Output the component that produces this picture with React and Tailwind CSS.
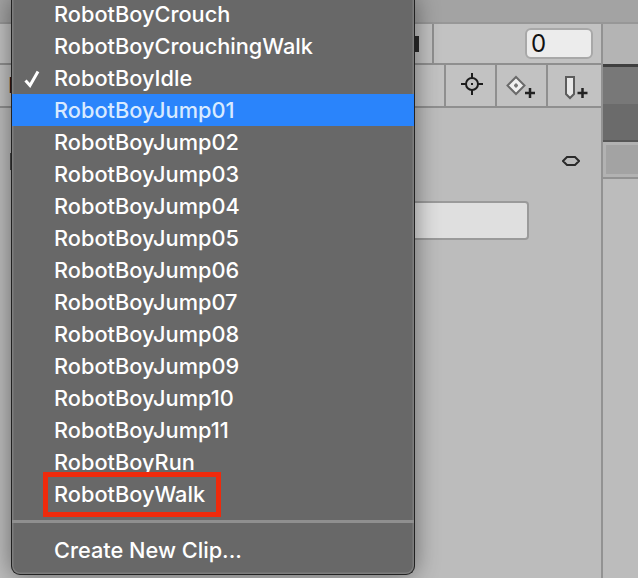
import React from "react";

const clips = [
  "RobotBoyCrouch",
  "RobotBoyCrouchingWalk",
  "RobotBoyIdle",
  "RobotBoyJump01",
  "RobotBoyJump02",
  "RobotBoyJump03",
  "RobotBoyJump04",
  "RobotBoyJump05",
  "RobotBoyJump06",
  "RobotBoyJump07",
  "RobotBoyJump08",
  "RobotBoyJump09",
  "RobotBoyJump10",
  "RobotBoyJump11",
  "RobotBoyRun",
  "RobotBoyWalk",
];

function TargetIcon() {
  return (
    <svg className="mt-[-3px] ml-[3px] block" width="24" height="24" viewBox="0 0 24 24" fill="none" stroke="#1c1c1c" strokeWidth="2">
      <circle cx="12" cy="12" r="6" />
      <path d="M12 1v5M12 18v5M1 12h5M18 12h5" />
      <rect x="11" y="11" width="2" height="2" fill="#1c1c1c" stroke="none" />
    </svg>
  );
}

function AddKeyIcon() {
  return (
    <svg className="block" width="32" height="28" viewBox="0 0 32 28">
      <path d="M10 5l8.500 8.500-8.500 8.500-8.500-8.500z" fill="#f0f0f0" stroke="#6a6a6a" strokeWidth="2" />
      <path d="M10 11.500v4M8 13.500h4" stroke="#777" strokeWidth="2" />
      <path d="M24 16v10M19 21h10" stroke="#222" strokeWidth="2.500" />
    </svg>
  );
}

function AddEventIcon() {
  return (
    <svg className="block" width="28" height="32" viewBox="0 0 28 32">
      <path d="M5 7h8v17l-4 4-4-4z" fill="#e8e8e8" stroke="#5c5c5c" strokeWidth="2" />
      <path d="M21.500 18v10M16.500 23h10" stroke="#222" strokeWidth="2.500" />
    </svg>
  );
}

function EyeIcon() {
  return (
    <svg className="block" width="18" height="10" viewBox="0 0 18 10" fill="none" stroke="#2a2a2a" strokeWidth="2">
      <path d="M1 5l4-4h8l4 4-4 4H5z" />
    </svg>
  );
}

function CheckIcon() {
  return (
    <svg className="absolute left-[12px] top-[8px] block" width="16" height="18" viewBox="0 0 16 18" fill="none" stroke="#fff" strokeWidth="3">
      <path d="M1.500 10.500l4.500 5 8-14" />
    </svg>
  );
}

function ClipMenu() {
  return (
    <div className="absolute left-[11px] top-[-2px] w-[404px] rounded-b-[9px] border border-t-0 border-[#222] bg-[#686868] pb-[8px] text-white shadow-[0_0_24px_rgba(0,0,0,0.45),inset_0_0_0_1.500px_rgba(255,255,255,0.14)]">
      {clips.map((clip, idx) => (
        <div
          key={clip}
          className={`relative h-[32px] pl-[42px] leading-[32px] ${idx === 3 ? "bg-[#2a84fb] text-[#d8eaff]" : ""}`}
        >
          {idx === 2 && <CheckIcon />}
          {clip}
        </div>
      ))}
      <div className="mt-[10px] mb-[11px] h-[3px] bg-[#8f8f8f]" />
      <div className="h-[32px] pl-[42px] leading-[32px]">Create New Clip...</div>
    </div>
  );
}

export default function App() {
  return (
    <div className="relative flex h-[578px] w-[638px] flex-col overflow-hidden bg-[#bcbcbc] font-['Inter','Liberation_Sans',sans-serif] text-[21.75px] font-medium">
      <div className="h-[24px] border-b-2 border-[#979797] bg-[#a3a3a3]" />

      <div className="flex flex-1">
        <div className="flex w-[601px] flex-col">
          {/* timeline toolbar */}
          <div className="flex h-[41px] border-b-2 border-[#8f8f8f] bg-[#c2c2c2]">
            <div className="w-[434px] border-r-2 border-[#8f8f8f]" />
            <div className="flex flex-1 items-center justify-end pr-[8px]">
              <div className="flex h-[31px] w-[68px] items-center rounded-[6px] border-2 border-[#a8a8a8] bg-[#ececec] pl-[4px] text-[24px] font-normal text-[#111]">
                0
              </div>
            </div>
          </div>

          {/* clip row */}
          <div className="flex h-[43px] border-b-2 border-[#8f8f8f] bg-[#c2c2c2]">
            <div className="w-[446px] border-r-2 border-[#8f8f8f] pl-[8px] leading-[40px] font-normal text-[#111]">P</div>
            <div className="flex w-[51px] items-center justify-center border-r-2 border-[#8f8f8f]">
              <TargetIcon />
            </div>
            <div className="flex w-[51px] items-center justify-center border-r-2 border-[#8f8f8f]">
              <AddKeyIcon />
            </div>
            <div className="flex flex-1 items-center justify-center">
              <AddEventIcon />
            </div>
          </div>

          {/* property area */}
          <div className="flex flex-1 flex-col">
            <div className="flex h-[93px] items-start pt-[45px] pr-[21px]">
              <div className="ml-[10px] h-[17px] w-[2px] bg-[#4a4a4a]" />
              <div className="ml-auto pt-[3px]">
                <EyeIcon />
              </div>
            </div>
            <div className="ml-[300px] h-[39px] w-[229px] rounded-r-[4px] border-2 border-l-0 border-[#9a9a9a] bg-[#dfdfdf]" />
          </div>
        </div>

        <div className="w-[2px] bg-[#929292]" />

        {/* side panel */}
        <div className="flex flex-1 flex-col">
          <div className="h-[40px] bg-[#b4b4b4]" />
          <div className="h-[3px] bg-[#3f3f3f]" />
          <div className="h-[37px] bg-[#787878]" />
          <div className="h-[38px] border-b-2 border-[#565656] bg-[#6b6b6b]" />
          <div className="h-[35px] border-y-[3px] border-l-[3px] border-[#b2b2b2] bg-[#a3a3a3]" />
          <div className="flex-1 border-t-2 border-[#929292] bg-[#bcbcbc]" />
        </div>
      </div>

      <div className="absolute left-[414px] top-[36px] h-[16px] w-[5px] bg-[#2b2b2b]" />

      <ClipMenu />

      {/* highlight drawn on the screenshot */}
      <div className="absolute left-[43px] top-[472px] h-[45px] w-[178px] border-[5px] border-[#ee2a0c]" />
    </div>
  );
}
